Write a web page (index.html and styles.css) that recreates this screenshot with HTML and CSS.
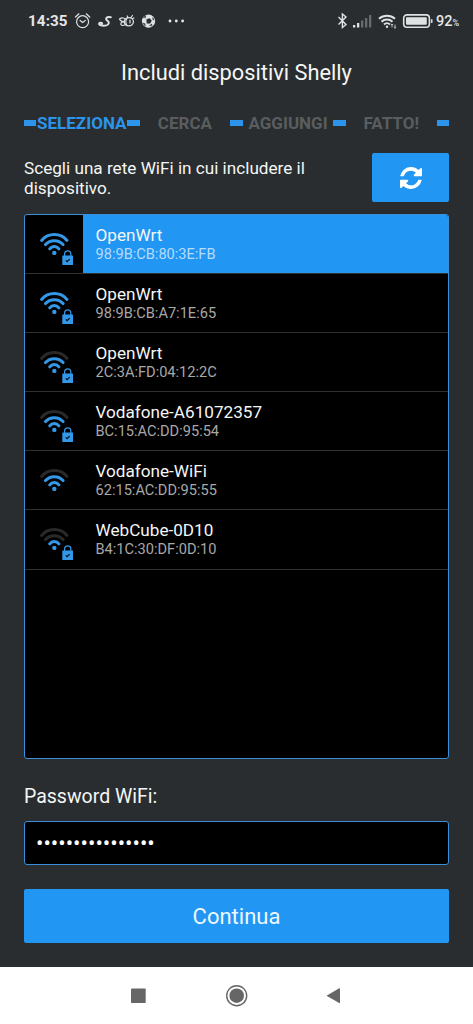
FILE: index.html
```html
<!DOCTYPE html>
<html lang="it">
<head>
<meta charset="utf-8">
<title>Includi dispositivi Shelly</title>
<link rel="stylesheet" href="styles.css">
</head>
<body>
<svg class="defs" width="0" height="0">
  <symbol id="outer" viewBox="0 0 58 58"><path d="M16.6 25.4A16.8 16.8 0 0 1 42 25.4"/></symbol>
  <symbol id="middle" viewBox="0 0 58 58"><path d="M20.5 29.6A11.8 11.8 0 0 1 38.1 29.6"/></symbol>
  <symbol id="inner" viewBox="0 0 58 58"><path d="M24.7 33.8A5.8 5.8 0 0 1 33.9 33.8"/><circle cx="29.3" cy="37.9" r="2.2" fill="#3498e8" stroke="none"/></symbol>
  <symbol id="lock" viewBox="0 0 58 58"><path d="M39.6 41v-2a3.1 3.1 0 0 1 6.2 0v2" fill="none" stroke="#3498e8" stroke-width="1.2"/><rect x="37.3" y="40.4" width="10.7" height="9.6" rx=".6" fill="#3498e8" stroke="none"/><path d="M40.8 45.4l1.3 1.3 2.6-2.6" fill="none" stroke="#02101d" stroke-width="1.3" stroke-linecap="butt"/></symbol>
</svg>
<div class="screen">
  <header class="status">
    <span class="clock">14:35</span>
    <svg class="status-left" viewBox="0 0 116 20" width="116" height="20" fill="none" stroke="#dfe2e3" stroke-width="1.2" stroke-linecap="round">
      <circle cx="8.6" cy="10.7" r="6"/><path d="M1.500 6l3.400-3.200M15.700 6l-3.400-3.200M6.100 9.500l2.500 2 2.700-2"/>
      <path d="M36.800 6.200c-2.500-.6-5 .2-4.600 2 .3 1.600 3 1.900 2.600 3.900-.5 2.300-4 2.900-6.500 2.500-1.800-.2-3.600-.8-3.200-2 .5-1.200 2.500-1 3-.2" stroke-width="2"/>
      <path d="M46 7.500c2-1.200 5-.5 6 1M45.500 8c.8 1.800 2.500 2.800 4.800 2.800M49.500 10.800c-2.800-.2-3.800 3.400-1 3.700l2.300-.5M54 6.500l-.8-1.500M57 6.500l1.500-2M58.500 7.500l1.500-.5" stroke-width="1.200"/><ellipse cx="54.800" cy="10.800" rx="4.600" ry="4.100" stroke-width="1.300"/><path d="M53 7.500c-1.500 2-1.500 4.500-.3 6.500M56 9v3" stroke-width="1.200"/>
      <circle cx="74.500" cy="10.200" r="6.600" fill="#dfe2e3" stroke="none"/>
      <path d="M72.800 8.500l2.800-1 1.900 2.100-1.300 2.600-3 .1zM69.500 6.300l2.200-1.800-.3 2.100zM69 12.200l1.800.4.500 2.200zM75.800 14.300l2-1.200.1 1.500zM79 6.800l1 2.200-1-.4z" fill="#292d2f" stroke="#292d2f" stroke-width=".5"/>
      <g fill="#e8eaeb" stroke="none"><circle cx="96" cy="10" r="1.400"/><circle cx="102.300" cy="10" r="1.400"/><circle cx="108.600" cy="10" r="1.400"/></g>
    </svg>
    <svg class="status-right" viewBox="0 0 98 20" width="98" height="20" fill="none" stroke="#dfe2e3" stroke-width="1.400">
      <path d="M.5 6l7.500 7.500-3.600 3V3l3.600 3L.5 13.500"/>
      <g stroke="none" fill="#dfe2e3"><path d="M15 14h2.300v2.500H15zM19 12h2.300v4.500H19z"/><path d="M23 9.500h2.300v7H23zM27 7h2.300v9.500H27zM31 4h2.300v12.500H31z" fill="#686b6d"/></g>
      <path d="M41 7.800a12 12 0 0 1 16 0M43.500 10.800a8 8 0 0 1 11 0M46 13.500a4.300 4.300 0 0 1 6 0" stroke-width="2"/><circle cx="49" cy="15.700" r="1.200" fill="#dfe2e3" stroke="none"/><path d="M54 13v3.500M52.900 14l1.100-1 1.100 1M57 13.500V17M55.900 16.300l1.100 1 1.100-1" stroke-width=".8"/>
      <rect x="65.700" y="3.900" width="25.700" height="12.300" rx="3.300" stroke-width="1.600"/><rect x="68" y="6.300" width="20.800" height="7.500" rx="1" fill="#dfe2e3" stroke="none"/><path d="M93.700 8.300v3.600" stroke-width="1.600"/>
    </svg>
    <span class="percent">92<small>%</small></span>
  </header>
  <h1 class="title">Includi dispositivi Shelly</h1>
  <nav class="steps">
    <i></i><span class="active">SELEZIONA</span><i></i><span>CERCA</span><i></i><span>AGGIUNGI</span><i></i><span>FATTO!</span><i></i>
  </nav>
  <section class="intro">
    <p>Scegli una rete WiFi in cui includere il dispositivo.</p>
    <button class="refresh" aria-label="Aggiorna">
      <svg viewBox="0 0 1536 1536" width="22" height="22" fill="#fff"><path d="M1511 928q0 5-1 7-64 268-268 434.500T764 1536q-146 0-282.500-55T238 1324l-129 129q-19 19-45 19t-45-19-19-45V960q0-26 19-45t45-19h448q26 0 45 19t19 45-19 45l-137 137q71 66 161 102t187 36q134 0 250-65t186-179q11-17 53-117 8-23 30-23h192q13 0 22.500 9.500t9.500 22.500zm25-800v448q0 26-19 45t-45 19h-448q-26 0-45-19t-19-45 19-45l138-138Q969 256 768 256q-134 0-250 65T332 500q-11 17-53 117-8 23-30 23H50q-13 0-22.500-9.500T18 608v-7q65-268 270-434.500T768 0q146 0 284 55.500T1297 212l130-129q19-19 45-19t45 19 19 45z"/></svg>
    </button>
  </section>
  <ul class="networks">
    <li class="selected"><svg class="wifi"><use href="#outer"/><use href="#middle"/><use href="#inner"/><use href="#lock"/></svg><div class="net"><b>OpenWrt</b><span>98:9B:CB:80:3E:FB</span></div></li>
    <li><svg class="wifi"><use href="#outer"/><use href="#middle"/><use href="#inner"/><use href="#lock"/></svg><div class="net"><b>OpenWrt</b><span>98:9B:CB:A7:1E:65</span></div></li>
    <li><svg class="wifi"><use class="off" href="#outer"/><use href="#middle"/><use href="#inner"/><use href="#lock"/></svg><div class="net"><b>OpenWrt</b><span>2C:3A:FD:04:12:2C</span></div></li>
    <li><svg class="wifi"><use class="off" href="#outer"/><use href="#middle"/><use href="#inner"/><use href="#lock"/></svg><div class="net"><b>Vodafone-A61072357</b><span>BC:15:AC:DD:95:54</span></div></li>
    <li><svg class="wifi"><use class="off" href="#outer"/><use href="#middle"/><use href="#inner"/></svg><div class="net"><b>Vodafone-WiFi</b><span>62:15:AC:DD:95:55</span></div></li>
    <li><svg class="wifi"><use class="off" href="#outer"/><use class="off" href="#middle"/><use href="#inner"/><use href="#lock"/></svg><div class="net"><b>WebCube-0D10</b><span>B4:1C:30:DF:0D:10</span></div></li>
  </ul>
  <div class="label">Password WiFi:</div>
  <div class="password">••••••••••••••••</div>
  <button class="continue">Continua</button>
  <footer class="navbar">
    <svg viewBox="0 0 473 57" width="473" height="57" fill="#666">
      <rect x="131" y="21.500" width="14.700" height="14.500" rx=".8"/>
      <circle cx="236.700" cy="28.700" r="7.300"/><circle cx="236.700" cy="28.700" r="10" fill="none" stroke="#666" stroke-width="1.400"/>
      <path d="M326.500 28.700L339.200 21.300Q340 21 340 22V35.500Q340 36.500 339.200 36.100Z"/>
    </svg>
  </footer>
</div>
</body>
</html>
```
FILE: styles.css
```css
* { box-sizing: border-box; }
body { margin: 0; background: #292d2f; font-family: Roboto, sans-serif; color: #f5f6f6; }
.defs { display: block; }
.screen { width: 473px; height: 1024px; display: flex; flex-direction: column; overflow: hidden; background: #292d2f; }
.status { height: 42px; flex: none; display: flex; align-items: center; padding: 0 13px 0 28px; color: #e4e6e7; }
.clock { width: 46px; font-size: 15.200px; font-weight: 700; letter-spacing: .1px; white-space: nowrap; }
.status-right { margin-left: auto; }
.percent { width: 24px; font-size: 14.500px; font-weight: 500; white-space: nowrap; display: flex; align-items: baseline; }
.percent small { font-size: 9px; }
.title { margin: 0; height: 60px; line-height: 61px; flex: none; text-align: center; font-size: 21.800px; font-weight: 400; }
.steps { margin: 0 24px; height: 41px; flex: none; display: flex; align-items: center; font-size: 17px; font-weight: 700; color: #5a5d5f; }
.steps i { width: 12.400px; height: 6px; background: #2c94ea; }
.steps span { flex: 1 1 0; min-width: 0; display: flex; justify-content: center; white-space: nowrap; }
.steps .active { color: #2c94ea; }
.intro { margin: 10px 24px 0; height: 49px; flex: none; display: flex; justify-content: space-between; }
.intro p { margin: 5px 0 0; width: 310px; font-size: 17.150px; line-height: 20px; }
button { border: 0; padding: 0; background: #2196f3; color: #eef8ff; font-family: inherit; border-radius: 2px; }
.refresh { width: 77px; height: 49px; display: flex; align-items: center; justify-content: center; }
.networks { list-style: none; margin: 12px 24px 0; padding: 0; height: 545px; flex: none; background: #000; border: 1px solid #3b8ed8; border-radius: 3px; overflow: hidden; }
.networks li { height: 59.100px; display: flex; border-bottom: 1px solid #303030; }
.wifi { width: 58px; height: 58px; flex: none; fill: none; stroke: #3498e8; stroke-width: 3; stroke-linecap: round; }
.wifi .off { stroke: #292929; }
.net { flex: 1; padding: 10px 0 0 12.500px; display: flex; flex-direction: column; }
.net b { font-weight: 400; font-size: 17.150px; line-height: 21px; }
.net span { font-size: 14.600px; line-height: 17px; color: #a8a8a8; }
.selected .net { background: #2196f3; }
.selected .net span { color: #b5dcfb; }
.label { margin: 25px 24px 0; height: 26px; line-height: 26px; flex: none; font-size: 19.500px; }
.password { margin: 11px 24px 0; height: 44px; line-height: 43px; flex: none; padding-left: 11px; background: #000; border: 1px solid #3b8ed8; border-radius: 3px; color: #fff; font-size: 22px; }
.continue { margin: 24px 24px 0; height: 54px; flex: none; font-size: 22px; }
.navbar { margin-top: 24px; height: 57px; flex: none; background: #fff; }
.navbar svg { display: block; }
```
